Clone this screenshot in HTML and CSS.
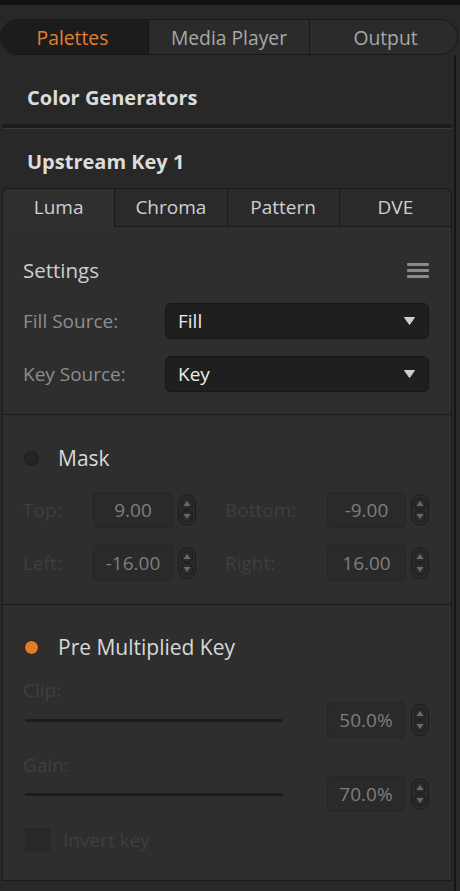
FILE: index.html
```html
<!DOCTYPE html>
<html>
<head>
<meta charset="utf-8">
<link rel="stylesheet" href="styles.css">
</head>
<body>
<div class="topstrip"></div>
<div class="maintabs">
  <div class="mtab active">Palettes</div>
  <div class="mtab">Media Player</div>
  <div class="mtab last">Output</div>
</div>
<div class="page">
  <div class="heading first">Color Generators</div>
  <div class="groove"></div>
  <div class="heading second">Upstream Key 1</div>
  <div class="keytabs">
    <div class="ktab active">Luma</div>
    <div class="ktab">Chroma</div>
    <div class="ktab">Pattern</div>
    <div class="ktab">DVE</div>
  </div>
  <div class="panel">
    <div class="section settings">
      <div class="settings-head">
        <span class="title">Settings</span>
        <svg class="menu" width="22" height="16" viewBox="0 0 22 16"><rect x="0" y="1" width="22" height="3" rx="1" fill="#8a8a8a"/><rect x="0" y="7" width="22" height="3" rx="1" fill="#8a8a8a"/><rect x="0" y="13" width="22" height="3" rx="1" fill="#8a8a8a"/></svg>
      </div>
      <div class="field">
        <span class="label">Fill Source:</span>
        <div class="select"><span>Fill</span><svg width="11" height="8" viewBox="0 0 11 8"><path d="M0.5 0.5 H10.5 L5.5 7.5 Z" fill="#cfcfcf" stroke="#cfcfcf" stroke-linejoin="round"/></svg></div>
      </div>
      <div class="field">
        <span class="label">Key Source:</span>
        <div class="select"><span>Key</span><svg width="11" height="8" viewBox="0 0 11 8"><path d="M0.5 0.5 H10.5 L5.5 7.5 Z" fill="#cfcfcf" stroke="#cfcfcf" stroke-linejoin="round"/></svg></div>
      </div>
    </div>
    <div class="section mask">
      <div class="toggle"><span class="dot off"></span><span class="toggle-label">Mask</span></div>
      <div class="grid">
        <span class="dim">Top:</span>
        <div class="num">9.00</div>
        <div class="spin"><svg width="12" height="26" viewBox="0 0 12 26"><circle cx="6" cy="7" r="5.5" fill="#2b2b2b" stroke="#1d1d1d"/><path d="M2.5 9 L6 4 L9.5 9 Z" fill="#6a6a6a"/><circle cx="6" cy="19" r="5.5" fill="#2b2b2b" stroke="#1d1d1d"/><path d="M2.5 17 L9.5 17 L6 22 Z" fill="#6a6a6a"/></svg></div>
        <span class="dim">Bottom:</span>
        <div class="num">-9.00</div>
        <div class="spin"><svg width="12" height="26" viewBox="0 0 12 26"><circle cx="6" cy="7" r="5.5" fill="#2b2b2b" stroke="#1d1d1d"/><path d="M2.5 9 L6 4 L9.5 9 Z" fill="#6a6a6a"/><circle cx="6" cy="19" r="5.5" fill="#2b2b2b" stroke="#1d1d1d"/><path d="M2.5 17 L9.5 17 L6 22 Z" fill="#6a6a6a"/></svg></div>
        <span class="dim">Left:</span>
        <div class="num">-16.00</div>
        <div class="spin"><svg width="12" height="26" viewBox="0 0 12 26"><circle cx="6" cy="7" r="5.5" fill="#2b2b2b" stroke="#1d1d1d"/><path d="M2.5 9 L6 4 L9.5 9 Z" fill="#6a6a6a"/><circle cx="6" cy="19" r="5.5" fill="#2b2b2b" stroke="#1d1d1d"/><path d="M2.5 17 L9.5 17 L6 22 Z" fill="#6a6a6a"/></svg></div>
        <span class="dim">Right:</span>
        <div class="num">16.00</div>
        <div class="spin"><svg width="12" height="26" viewBox="0 0 12 26"><circle cx="6" cy="7" r="5.5" fill="#2b2b2b" stroke="#1d1d1d"/><path d="M2.5 9 L6 4 L9.5 9 Z" fill="#6a6a6a"/><circle cx="6" cy="19" r="5.5" fill="#2b2b2b" stroke="#1d1d1d"/><path d="M2.5 17 L9.5 17 L6 22 Z" fill="#6a6a6a"/></svg></div>
      </div>
    </div>
    <div class="section premult">
      <div class="toggle"><span class="dot on"></span><span class="toggle-label">Pre Multiplied Key</span></div>
      <div class="slider-block clip">
        <span class="dim">Clip:</span>
        <div class="slider-row">
          <div class="track"></div>
          <div class="num">50.0%</div>
          <div class="spin"><svg width="12" height="26" viewBox="0 0 12 26"><circle cx="6" cy="7" r="5.5" fill="#2b2b2b" stroke="#1d1d1d"/><path d="M2.5 9 L6 4 L9.5 9 Z" fill="#6a6a6a"/><circle cx="6" cy="19" r="5.5" fill="#2b2b2b" stroke="#1d1d1d"/><path d="M2.5 17 L9.5 17 L6 22 Z" fill="#6a6a6a"/></svg></div>
        </div>
      </div>
      <div class="slider-block gain">
        <span class="dim">Gain:</span>
        <div class="slider-row">
          <div class="track"></div>
          <div class="num">70.0%</div>
          <div class="spin"><svg width="12" height="26" viewBox="0 0 12 26"><circle cx="6" cy="7" r="5.5" fill="#2b2b2b" stroke="#1d1d1d"/><path d="M2.5 9 L6 4 L9.5 9 Z" fill="#6a6a6a"/><circle cx="6" cy="19" r="5.5" fill="#2b2b2b" stroke="#1d1d1d"/><path d="M2.5 17 L9.5 17 L6 22 Z" fill="#6a6a6a"/></svg></div>
        </div>
      </div>
      <div class="check"><span class="box"></span><span class="dim">Invert key</span></div>
    </div>
  </div>
</div>
</body>
</html>
```

FILE: styles.css
```css
* { box-sizing: border-box; }
html, body { margin: 0; padding: 0; }
body {
  width: 460px;
  height: 891px;
  overflow: hidden;
  background: #282828;
  font-family: "Open Sans", "Noto Sans", sans-serif;
  color: #cfcfcf;
}
.topstrip {
  height: 5px;
  background: #121212;
}
.maintabs {
  display: flex;
  margin: 14px 2px 0 0;
  height: 36px;
  border: 1px solid #171717;
  border-radius: 18px;
  overflow: hidden;
  background: #2b2b2b;
}
.mtab {
  display: flex;
  align-items: center;
  justify-content: center;
  font-size: 19.3px;
  color: #a8a8a8;
  border-right: 1px solid #171717;
  background: #2b2b2b;
}
.mtab:nth-child(1) { width: 148px; }
.mtab:nth-child(2) { width: 161px; }
.mtab.last { flex: 1; border-right: 0; padding-left: 4px; }
.mtab.active {
  background: #1c1c1c;
  color: #e3802e;
  padding-right: 4px;
}
.page {
  width: 456px;
  border-right: 2px solid #151515;
  height: 836px;
  padding-bottom: 10px;
  display: flex;
  flex-direction: column;
}
.heading {
  font-size: 20px;
  line-height: 27px;
  font-weight: 700;
  color: #dcdcdc;
  padding-left: 27px;
}
.heading.first { padding-top: 29px; height: 69px; }
.groove {
  margin: 0 2px 0 2px;
  height: 5px;
  border-radius: 2px;
  background: #1c1c1c;
  border-bottom: 1px solid #3a3a3a;
}
.heading.second { padding-top: 19px; height: 59px; }
.keytabs {
  display: flex;
  margin: 0 2px;
  height: 39px;
  border: 1px solid #1a1a1a;
  border-bottom: 0;
  border-radius: 6px 6px 0 0;
  background: #2a2a2a;
  overflow: hidden;
}
.ktab {
  flex: 1;
  display: flex;
  align-items: center;
  justify-content: center;
  font-size: 19px;
  color: #d0d0d0;
  border-left: 1px solid #1a1a1a;
  border-bottom: 1px solid #1a1a1a;
  padding-bottom: 2px;
}
.ktab:first-child { border-left: 0; }
.ktab.active { background: #2f2f2f; border-bottom-color: transparent; }
.panel {
  margin: 0 2px;
  flex: 1;
  background: #2e2e2e;
  border: 1px solid #1a1a1a;
  border-top: 0;
  display: flex;
  flex-direction: column;
}
.section {
  padding: 0 22px 0 20px;
  border-bottom: 1px solid #1b1b1b;
  flex: none;
}
.settings { height: 188px; padding-top: 29px; }
.settings-head {
  display: flex;
  justify-content: space-between;
  align-items: center;
  height: 28px;
  margin-bottom: 19px;
}
.title { font-size: 20.5px; color: #cfcfcf; }
.field {
  display: flex;
  align-items: center;
  height: 36px;
  margin-bottom: 17px;
}
.label { width: 142px; font-size: 19px; color: #8d8d8d; }
.select {
  flex: 1;
  height: 36px;
  background: #1f1f1f;
  border: 1px solid #161616;
  border-radius: 6px;
  display: flex;
  align-items: center;
  justify-content: space-between;
  padding: 0 13px 0 12px;
  font-size: 19px;
  color: #ececec;
}
.mask { height: 190px; padding-top: 29px; }
.toggle { display: flex; align-items: center; height: 28px; }
.dot {
  width: 15px; height: 15px; border-radius: 50%;
  margin: 0 19px 0 1px;
}
.dot.off { background: #242424; border: 1px solid #1c1c1c; }
.dot.on { background: #e07b2a; border: 1px solid #1c1c1c; }
.toggle-label { font-size: 21px; color: #d8d8d8; }
.grid {
  display: grid;
  grid-template-columns: 70px 80px 52px 102px 79px 23px;
  grid-auto-rows: 36px;
  row-gap: 17px;
  align-items: center;
  margin-top: 20px;
}
.spin { display: flex; justify-content: center; align-items: center; height: 32px; width: 18px; border: 1px solid #1d1d1d; border-radius: 9px; background: #2a2a2a; }
.grid .spin { margin-left: 5px; }
.dim { font-size: 19px; line-height: 26px; color: #3f3f3f; }
.num {
  height: 36px;
  background: #2a2a2a;
  border: 1px solid #252525;
  border-radius: 5px;
  display: flex;
  align-items: center;
  justify-content: center;
  font-size: 19px;
  color: #7e7e7e;
}
.premult { flex: 1; padding-top: 28px; border-bottom: 0; }
.slider-block { display: flex; flex-direction: column; }
.slider-block.clip { margin-top: 16px; }
.slider-block.gain { margin-top: 14px; }
.clip .slider-row { margin-top: -1px; }
.gain .slider-row { margin-top: -2px; }
.slider-row {
  display: flex;
  align-items: center;
  height: 36px;
}
.track {
  width: 260px;
  height: 3px;
  background: #1c1c1c;
  border-radius: 2px;
  margin: 0 44px 0 2px;
}
.slider-row .num { width: 79px; }
.slider-row .spin { margin-left: 6px; }
.check { display: flex; align-items: center; margin-top: 16px; height: 23px; }
.box { width: 25px; height: 23px; background: #282828; border: 1px solid #262626; border-radius: 2px; margin: 0 13px 0 2px; }
```
